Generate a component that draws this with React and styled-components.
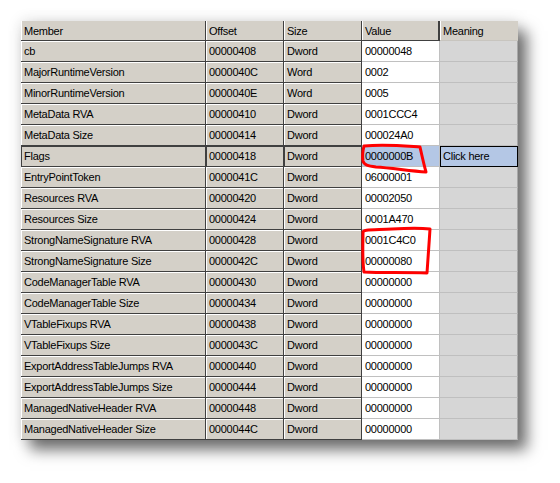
import React from "react";
import styled, { createGlobalStyle } from "styled-components";

const rows = [
  ["cb", "00000408", "Dword", "00000048"],
  ["MajorRuntimeVersion", "0000040C", "Word", "0002"],
  ["MinorRuntimeVersion", "0000040E", "Word", "0005"],
  ["MetaData RVA", "00000410", "Dword", "0001CCC4"],
  ["MetaData Size", "00000414", "Dword", "000024A0"],
  ["Flags", "00000418", "Dword", "0000000B", "Click here"],
  ["EntryPointToken", "0000041C", "Dword", "06000001"],
  ["Resources RVA", "00000420", "Dword", "00002050"],
  ["Resources Size", "00000424", "Dword", "0001A470"],
  ["StrongNameSignature RVA", "00000428", "Dword", "0001C4C0"],
  ["StrongNameSignature Size", "0000042C", "Dword", "00000080"],
  ["CodeManagerTable RVA", "00000430", "Dword", "00000000"],
  ["CodeManagerTable Size", "00000434", "Dword", "00000000"],
  ["VTableFixups RVA", "00000438", "Dword", "00000000"],
  ["VTableFixups Size", "0000043C", "Dword", "00000000"],
  ["ExportAddressTableJumps RVA", "00000440", "Dword", "00000000"],
  ["ExportAddressTableJumps Size", "00000444", "Dword", "00000000"],
  ["ManagedNativeHeader RVA", "00000448", "Dword", "00000000"],
  ["ManagedNativeHeader Size", "0000044C", "Dword", "00000000"],
];

export default function App() {
  return (
    <Page>
      <GlobalStyle />
      <Grid>
        <Head>Member</Head>
        <Head>Offset</Head>
        <Head>Size</Head>
        <Head $strong>Value</Head>
        <Head $last>Meaning</Head>
        {rows.map(([member, offset, size, value, meaning]) => {
          const sel = !!meaning;
          return (
            <React.Fragment key={member}>
              <Fixed $selected={sel}>{member}</Fixed>
              <Fixed $selected={sel}>{offset}</Fixed>
              <Fixed $selected={sel}>{size}</Fixed>
              <Value $selected={sel}>{value}</Value>
              <Meaning $selected={sel}>{meaning}</Meaning>
            </React.Fragment>
          );
        })}
      </Grid>
      <Marks width="560" height="483" viewBox="0 0 560 483">
        <path d="M364 146 C 385 144, 405 146, 420 147 C 422 156, 424 165, 426 172 C 410 171, 392 168, 376 167 C 368 166, 364 165, 363 161 C 362 155, 363 150, 364 146 Z" />
        <path d="M363 233 C 362 229, 372 230, 392 229 C 408 228, 422 228, 430 229 C 429 244, 428 260, 427 273 C 405 272, 383 273, 364 272 C 362 258, 363 245, 363 233" />
      </Marks>
    </Page>
  );
}

const GlobalStyle = createGlobalStyle`
  body {
    margin: 0;
    background: #fff;
  }
`;

const Page = styled.div`
  position: relative;
  width: 560px;
  height: 483px;
  padding: 21px 0 0 21px;
  box-sizing: border-box;
  font-family: "Liberation Sans", Tahoma, sans-serif;
  font-size: 11px;
  letter-spacing: -0.25px;
  color: #000;
`;

const Grid = styled.div`
  display: grid;
  grid-template-columns: 185px 78px 78px 78px 78px;
  grid-template-rows: 20px repeat(19, 21px);
  width: 497px;
  background: #d4d0c8;
  box-shadow: 9px 10px 14px rgba(0, 0, 0, 0.55), 0 0 14px rgba(0, 0, 0, 0.12);
`;

const CellBase = styled.div`
  box-sizing: border-box;
  display: flex;
  align-items: center;
  padding: 0 0 0 3px;
  white-space: nowrap;
  overflow: hidden;
`;

const Head = styled(CellBase)`
  background: #d4d0c8;
  border-bottom: 1px solid ${(p) => (p.$last ? "#c8c5bf" : "#404040")};
  border-right: ${(p) => (p.$strong ? "2px solid #404040" : p.$last ? "none" : "1px solid #404040")};
  box-shadow: inset 1px 0 0 #fff;
  padding-top: 1px;
`;

const Fixed = styled(CellBase)`
  background: #d4d0c8;
  border-right: 1px solid #404040;
  border-bottom: 1px solid #404040;
  box-shadow: ${(p) =>
    p.$selected ? "inset 1px 1px 0 #404040" : "inset 1px 1px 0 #ffffff"};
`;

const Value = styled(CellBase)`
  background: ${(p) => (p.$selected ? "#b4c7e5" : "#fff")};
  border-right: 1px solid #c0c0c0;
  border-bottom: 1px solid #c0c0c0;
`;

const Meaning = styled(CellBase)`
  background: ${(p) => (p.$selected ? "#b4c7e5" : "#d6d6d6")};
  border-bottom: 1px solid #bfbfbf;
  border-right: 1px solid #a8a8a8;
  outline: ${(p) => (p.$selected ? "1px solid #000" : "none")};
  outline-offset: -1px;
`;

const Marks = styled.svg`
  position: absolute;
  left: 0;
  top: 0;
  pointer-events: none;

  path {
    fill: none;
    stroke: #ff0000;
    stroke-width: 3;
    stroke-linejoin: round;
    stroke-linecap: round;
  }
`;
